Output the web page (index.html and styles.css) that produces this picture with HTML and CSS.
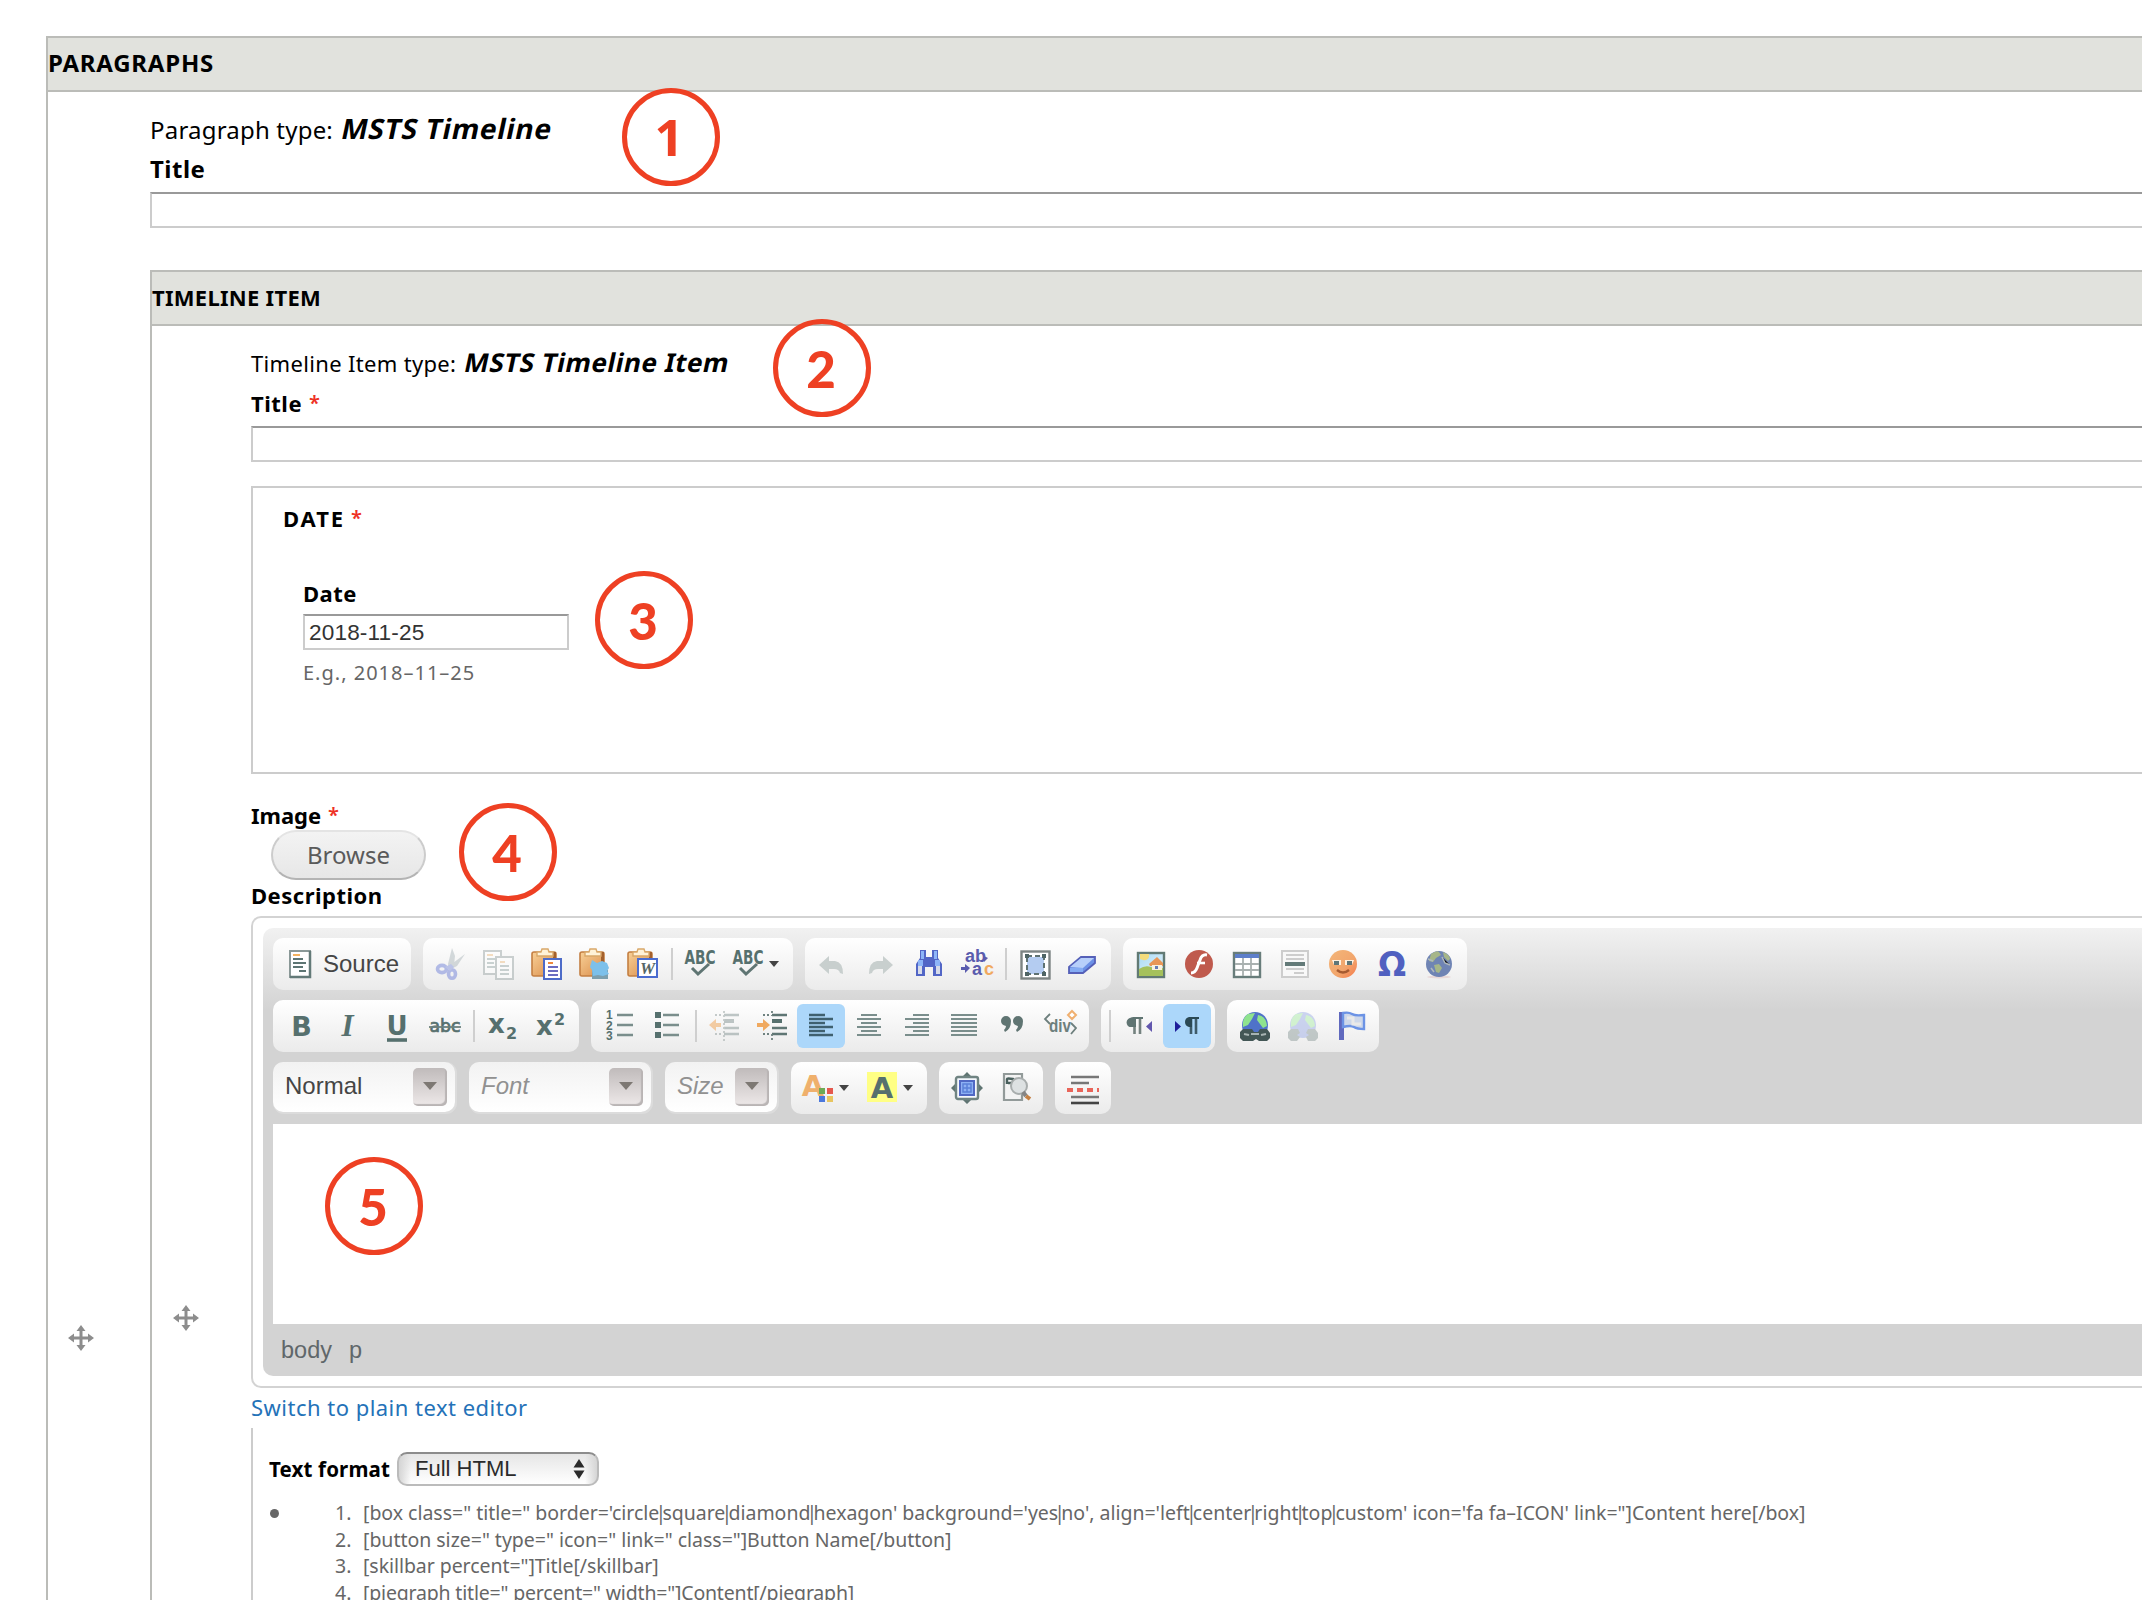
FILE: index.html
```html
<!DOCTYPE html>
<html lang="en">
<head>
<meta charset="utf-8">
<title>Paragraphs</title>
<link rel="stylesheet" href="styles.css">
</head>
<body>
<svg class="defs" aria-hidden="true">
  <defs>
    <linearGradient id="sky" x1="0" y1="0" x2="1" y2="1"><stop offset="0" stop-color="#a9daf5"/><stop offset="1" stop-color="#e4f3fa"/></linearGradient>
    <linearGradient id="wood" x1="0" y1="0" x2="1" y2="1"><stop offset="0" stop-color="#f8d097"/><stop offset="1" stop-color="#d98b48"/></linearGradient>
    <linearGradient id="face" x1="0" y1="0" x2="1" y2="1"><stop offset="0" stop-color="#f3b77a"/><stop offset=".6" stop-color="#f2a56c"/><stop offset="1" stop-color="#f5794a"/></linearGradient>
    <symbol id="clip" viewBox="0 0 32 32">
      <rect x="1" y="4" width="24" height="24" rx="2" fill="url(#wood)" stroke="#c47f42" stroke-width="1.6"/>
      <path d="M22 4h3v10h-3z" fill="#a3602c"/>
      <path d="M6 8V4h4l1-3h6l1 3h4v4z" fill="#fff2d8" stroke="#d9a869" stroke-width="1.4"/>
    </symbol>
    <symbol id="move" viewBox="0 0 26 26">
      <path d="M13 3v20M3 13h20" stroke="#8d8d8d" stroke-width="3"/>
      <path d="M13 0l4.500 6h-9zM13 26l4.500-6h-9zM0 13l6-4.500v9zM26 13l-6-4.500v9z" fill="#8d8d8d"/>
    </symbol>
  </defs>
</svg>

<section class="fieldset outer">
  <h2 class="legend legend-outer">PARAGRAPHS</h2>
  <div class="columns">
    <div class="handle-col"><svg class="handle handle-outer"><use href="#move"/></svg></div>
    <div class="content">
      <div class="type-row type-row-outer"><span>Paragraph type:</span><em>MSTS Timeline</em></div>
      <label class="label label-outer">Title</label>
      <div class="textfield"></div>

      <section class="fieldset inner">
        <h3 class="legend legend-inner">TIMELINE ITEM</h3>
        <div class="columns">
          <div class="handle-col handle-col-inner"><svg class="handle handle-inner"><use href="#move"/></svg></div>
          <div class="content">
            <div class="type-row type-row-inner"><span>Timeline Item type:</span><em>MSTS Timeline Item</em></div>
            <label class="label label-title"><span>Title</span><b class="req">*</b></label>
            <div class="textfield"></div>

            <div class="date-box">
              <div class="label label-group"><span>DATE</span><b class="req">*</b></div>
              <div class="date-field">
                <label class="label">Date</label>
                <div class="textfield date-input">2018-11-25</div>
                <div class="hint">E.g., 2018–11–25</div>
              </div>
            </div>

            <div class="label label-image"><span>Image</span><b class="req">*</b></div>
            <button class="browse">Browse</button>
            <div class="label label-desc">Description</div>

            <div class="editor">
              <div class="editor-inner">
                <div class="toolbar">
                  <div class="group">
                    <div class="btn source"><svg viewBox="0 0 32 32"><rect x="5" y="3" width="20" height="26" fill="#fff" stroke="#8a9897" stroke-width="2"/><path d="M25 3v26H5" fill="none" stroke="#637a78" stroke-width="2.500"/><path d="M8 7h7" stroke="#f3b25f" stroke-width="2"/><path d="M8 11h10M8 15h13M8 19h10M14 23h7" stroke="#5d7573" stroke-width="2"/></svg><span>Source</span></div>
                  </div>
                  <div class="group">
                    <div class="btn dim"><svg viewBox="0 0 32 32"><path d="M17 0l3 8-1 9-5 3-1-4zM30 6l-8 12-6 3-2-3z" fill="#b4bec2"/><g fill="none" stroke="#7c8cdb" stroke-width="3.600"><ellipse cx="7" cy="21" rx="4.500" ry="3.600"/><ellipse cx="17" cy="26" rx="3.500" ry="4.300"/></g><path d="M10 19l6-3 3 3-4 4z" fill="#8e9cdd"/></svg></div>
                    <div class="btn dim"><svg viewBox="0 0 32 32"><g fill="#fff" stroke="#a5afaf" stroke-width="2"><rect x="1" y="3" width="17" height="23"/><rect x="13" y="9" width="17" height="22"/></g><path d="M4 7h6M17 14h5" stroke="#f0c795" stroke-width="2"/><path d="M4 11h8M4 15h7M4 19h8M17 18h9M17 22h9M17 26h9" stroke="#a5b4b3" stroke-width="1.800"/></svg></div>
                    <div class="btn"><svg viewBox="0 0 32 32"><use href="#clip"/><rect x="13" y="11" width="17" height="20" fill="#fff" stroke="#4d6bc8" stroke-width="2"/><path d="M17 15h5" stroke="#f08a3c" stroke-width="2"/><path d="M17 19h10M17 23h10M17 27h10" stroke="#6a6cc0" stroke-width="2"/></svg></div>
                    <div class="btn"><svg viewBox="0 0 32 32"><use href="#clip"/><path d="M13 18l16 4v9H13z" fill="#7c9fae"/><path d="M13 12l5 3 5-2 5 2 2 5-2 3 2 3-6 2-5-1-5 1-1-6-2-3z" fill="#7cc0ea"/></svg></div>
                    <div class="btn"><svg viewBox="0 0 32 32"><use href="#clip"/><rect x="11" y="11" width="19" height="18" fill="#fff" stroke="#4a6cd0" stroke-width="2"/><text x="20.500" y="26" class="g-word">W</text></svg></div>
                    <i class="sep"></i>
                    <div class="btn"><svg viewBox="0 0 32 32"><text x="15" y="16" class="g-abc" textLength="31" lengthAdjust="spacingAndGlyphs">ABC</text><path d="M7 20l6 6L24 16" fill="none" stroke="#5f7573" stroke-width="3"/></svg></div>
                    <div class="btn wide"><svg viewBox="0 0 32 32"><text x="15" y="16" class="g-abc" textLength="31" lengthAdjust="spacingAndGlyphs">ABC</text><path d="M7 20l6 6L24 16" fill="none" stroke="#5f7573" stroke-width="3"/></svg><i class="caret"></i></div>
                  </div>
                  <div class="group">
                    <div class="btn"><svg viewBox="0 0 32 32"><path d="M2 17L12 8v5h6q8 1 8 13l-3-1q-1-4-6-4h-5v5z" fill="#c8cfce"/></svg></div>
                    <div class="btn"><svg viewBox="0 0 32 32"><path d="M28 17L18 8v5h-6q-8 1-8 13l3-1q1-4 6-4h5v5z" fill="#c8cfce"/></svg></div>
                    <div class="btn"><svg viewBox="0 0 32 32"><path d="M7 2h6v7h6V2h6v8l4 6v12h-9v-9h-8v9H3V16l4-6z" fill="#5266c6"/><path d="M8 3h3v8H8zM21 3h3v8h-3zM5 12h5v6H5zM22 12h5v6h-5z" fill="#8db5f8"/><path d="M5 18h4v8H5zM23 18h4v8h-4z" fill="#d7dce9"/></svg></div>
                    <div class="btn"><svg viewBox="0 0 32 32"><text class="g-rep"><tspan x="4" y="14">ab</tspan><tspan x="11" y="27">a</tspan><tspan x="23" y="27" class="g-orange">c</tspan></text><path d="M0 15v4h4v-3l5 4-5 5v-3H0zM23 8l4 2-4 4" fill="#5a5cae"/></svg></div>
                    <i class="sep"></i>
                    <div class="btn"><svg viewBox="0 0 32 32"><rect x="2.500" y="3.500" width="28" height="27" fill="#fff" stroke="#7d8483" stroke-width="2.400"/><rect x="8" y="9" width="17" height="17" fill="#b4ccf1"/><path d="M8 8h17v18H8z" fill="none" stroke="#5f7272" stroke-width="2" stroke-dasharray="5 3"/><path d="M6 6h4v4H6zM23 6h4v4h-4zM6 24h4v4H6zM23 24h4v4h-4z" fill="#4f6464"/></svg></div>
                    <div class="btn"><svg viewBox="0 0 32 32"><path d="M2 19L14 9h14v6L16 25H2z" fill="#6c90e6" stroke="#5560b8" stroke-width="1.800"/><path d="M3 19L14 10h13L16 20z" fill="#b7cffa"/><path d="M3 20h13v4H3z" fill="#84abf3"/></svg></div>
                  </div>
                  <div class="group">
                    <div class="btn"><svg viewBox="0 0 32 32"><rect x="3" y="5" width="26" height="24" fill="url(#sky)" stroke="#627a74" stroke-width="2.400"/><path d="M4 21q6-4 12-2t12 1v8H4z" fill="#a5c15c"/><path d="M5 6h9v3q-2 4-6 3l-3-1z" fill="#f4dc7c"/><path d="M14 16l8-7 6 6v3H15z" fill="#e89657"/><path d="M17 17h10v5H17z" fill="#f8f2df"/><path d="M20 18h3v3h-3z" fill="#657cb8"/></svg></div>
                    <div class="btn"><svg viewBox="0 0 32 32"><circle cx="16" cy="16" r="14" fill="#bf5a4d"/><path d="M24 7q-5-1-7 5l-3 8q-2 5-6 5" fill="none" stroke="#fff" stroke-width="3"/><path d="M14 15h8" stroke="#fff" stroke-width="2.600"/></svg></div>
                    <div class="btn"><svg viewBox="0 0 32 32"><rect x="3" y="5" width="26" height="24" fill="#fff" stroke="#687d7b" stroke-width="2.400"/><path d="M4 6h24v4H4z" fill="#5d7fca"/><path d="M4 16h24M4 22h24M12 10v18M20 10v18" stroke="#a9b1b0" stroke-width="1.800"/></svg></div>
                    <div class="btn"><svg viewBox="0 0 32 32"><rect x="3" y="3" width="26" height="26" fill="#f8f8f8" stroke="#cdcdcd" stroke-width="2"/><path d="M7 7h18M7 11h18M7 21h18M15 25h10" stroke="#cdcdcd" stroke-width="1.800"/><path d="M6 16h20" stroke="#637a78" stroke-width="4"/></svg></div>
                    <div class="btn"><svg viewBox="0 0 32 32"><circle cx="16" cy="16" r="14" fill="url(#face)"/><path d="M5 12h9v5H7zM18 12h9l-2 5h-7z" fill="#fff1df"/><path d="M7 13h5v4H7zM20 13h5v4h-5z" fill="#5e7779"/><path d="M10 22q6 5 12 0" fill="none" stroke="#a65a30" stroke-width="2.400"/></svg></div>
                    <div class="btn"><svg viewBox="0 0 32 32"><text x="17" y="28" class="g-omega">Ω</text></svg></div>
                    <div class="btn"><svg viewBox="0 0 32 32"><ellipse cx="16" cy="29" rx="12" ry="1.500" fill="#e8d8d8"/><circle cx="16" cy="16" r="13" fill="#6f84b4"/><path d="M8 6q6-4 8-2l2 3-5 3-3 4-4-1zM20 4q7 3 7 7l-2 2-4-4zM11 17l5-1 3 4-3 5-3-1z" fill="#a6b688"/><path d="M5 11l5 2M19 9l3 6 5 2M8 20l3 4" stroke="#b0b9bc" stroke-width="1.500"/></svg></div>
                  </div>
                </div>

                <div class="toolbar">
                  <div class="group">
                    <div class="btn"><svg viewBox="0 0 32 32"><text x="16.500" y="26" class="g-bold">B</text></svg></div>
                    <div class="btn"><svg viewBox="0 0 32 32"><text x="14.500" y="26" class="g-ital">I</text></svg></div>
                    <div class="btn"><svg viewBox="0 0 32 32"><text x="16" y="25" class="g-bold g-under">U</text><path d="M6 30h20" stroke="#56706e" stroke-width="3.600"/></svg></div>
                    <div class="btn"><svg viewBox="0 0 32 32"><text x="16" y="22" class="g-strike" textLength="31" lengthAdjust="spacingAndGlyphs">abc</text><path d="M0 17h32" stroke="#6b807e" stroke-width="1.800"/></svg></div>
                    <i class="sep"></i>
                    <div class="btn"><svg viewBox="0 0 32 32"><text x="1" y="23" class="g-x">x</text><text x="19" y="29" class="g-n">2</text></svg></div>
                    <div class="btn"><svg viewBox="0 0 32 32"><text x="1" y="25" class="g-x">x</text><text x="19" y="15" class="g-n">2</text></svg></div>
                  </div>
                  <div class="group">
                    <div class="btn"><svg viewBox="0 0 32 32"><g class="g-num"><text x="3" y="9">1</text><text x="3" y="20">2</text><text x="3" y="30">3</text></g><path d="M14 5h16M14 15h16M14 25h16" stroke="#7a8e8c" stroke-width="2.400"/></svg></div>
                    <div class="btn"><svg viewBox="0 0 32 32"><path d="M4 2h6v6H4zM4 12h6v6H4zM4 22h6v6H4z" fill="#56706e"/><path d="M12 5h16M12 15h16M12 25h16" stroke="#7a8e8c" stroke-width="2.400"/></svg></div>
                    <i class="sep"></i>
                    <div class="btn dim"><svg viewBox="0 0 32 32"><path d="M15 5h15M15 18h15M15 24h15" stroke="#8d9c9b" stroke-width="2.600"/><path d="M15 11h10" stroke="#8d9c9b" stroke-width="4"/><path d="M6 5h7M6 24h7M15 1v30" stroke="#9aa5a4" stroke-width="1.800" stroke-dasharray="2 2"/><path d="M0 15l7-6v4h5v4H7v4z" fill="#f0a95f"/></svg></div>
                    <div class="btn"><svg viewBox="0 0 32 32"><path d="M15 5h15M15 18h15M15 24h15" stroke="#5f7674" stroke-width="2.600"/><path d="M15 11h10" stroke="#56706e" stroke-width="4"/><path d="M6 5h7M6 24h7M15 1v5M15 24v6" stroke="#6f8280" stroke-width="1.800" stroke-dasharray="2 2"/><path d="M13 15L6 9v4H0v4h6v4z" fill="#f0a95f"/></svg></div>
                    <div class="btn on"><svg viewBox="0 0 32 32"><path d="M4 5h16M4 9h24M4 13h16M4 17h24M4 21h16M4 25h24" stroke="#3f606f" stroke-width="2.400"/></svg></div>
                    <div class="btn"><svg viewBox="0 0 32 32"><path d="M8 5h16M4 9h24M8 13h16M4 17h24M8 21h16M4 25h24" stroke="#7a8e8c" stroke-width="2.200"/></svg></div>
                    <div class="btn"><svg viewBox="0 0 32 32"><path d="M12 5h16M4 9h24M12 13h16M4 17h24M12 21h16M4 25h24" stroke="#7a8e8c" stroke-width="2.200"/></svg></div>
                    <div class="btn"><svg viewBox="0 0 32 32"><path d="M2 5h26M2 9h26M2 13h26M2 17h26M2 21h26M2 25h26" stroke="#7a8e8c" stroke-width="2.200"/></svg></div>
                    <div class="btn"><svg viewBox="0 0 32 32"><path d="M4 11a5 5 0 1 1 10 0q0 8-6 11l-1-2q2-2 2-4-5-1-5-5zM16 11a5 5 0 1 1 10 0q0 8-6 11l-1-2q2-2 2-4-5-1-5-5z" fill="#5f7472"/></svg></div>
                    <div class="btn"><svg viewBox="0 0 32 32"><path d="M5 4L0 9l5 5M26 13l5 5-5 6" fill="none" stroke="#6d7f7d" stroke-width="1.800"/><path d="M27 1l4 4-4 4-4-4z" fill="#fff" stroke="#f0b070" stroke-width="2"/><text x="4" y="22" class="g-div" textLength="22" lengthAdjust="spacingAndGlyphs">div</text></svg></div>
                  </div>
                  <div class="group">
                    <i class="sep"></i>
                    <div class="btn"><svg viewBox="0 0 32 32"><path d="M17 8v16M11.500 8v16" stroke="#74827f" stroke-width="2.600"/><path d="M20 8H10.500a4.500 4.500 0 0 0-4 9H12V9h8z" fill="#5f7472"/><path d="M20 7H10q-4 1-4 5t4 5h3V9h7z" fill="#5f7472"/><path d="M29 11v11l-6-5.500z" fill="#6257ae"/></svg></div>
                    <div class="btn on"><svg viewBox="0 0 32 32"><path d="M25 8v16M20 8v16" stroke="#3e5b69" stroke-width="2.600"/><path d="M28 7H18q-4 1-4 5t4 5h3V9h7z" fill="#2b4954"/><path d="M4 11v11l6-5.500z" fill="#1e1e9a"/></svg></div>
                  </div>
                  <div class="group">
                    <div class="btn"><svg viewBox="0 0 32 32"><circle cx="16" cy="15" r="13" fill="#4f72c9"/><path d="M9 4l7-1-3 6-4 6-5 2q-1-9 5-13zM19 5q8 1 9 11l-4 2-3-4-3-4z" fill="#8fe38e"/><path d="M4 19h9l2 3h4l2-3h7l3 4v5l-3 3h-8l-3-2-3 2H4l-3-3v-6z" fill="#435756"/><path d="M5 24l5 1M12 24h8M22 25l5-1" stroke="#a7b3b2" stroke-width="2"/></svg></div>
                    <div class="btn dim"><svg viewBox="0 0 32 32"><circle cx="16" cy="15" r="13" fill="#a6b5e8"/><path d="M9 4l7-1-3 6-4 6-5 2q-1-9 5-13zM19 5q8 1 9 11l-4 2-3-4-3-4z" fill="#b3edb1"/><path d="M4 19h7l2 4-3 2 3 2-3 4H4l-3-3v-6zM21 19h7l3 4v5l-3 3h-7l-2-4 3-2-3-2z" fill="#98a5a4"/></svg></div>
                    <div class="btn"><svg viewBox="0 0 32 32"><path d="M4 2h5v28H4z" fill="#6069be"/><path d="M8 3q6-1 9 1t12 1v14q-7 0-10-2t-11 0z" fill="#ced8ea" stroke="#6c93e5" stroke-width="2.400"/><path d="M12 8h6v6h8" stroke="#e9e9e9" stroke-width="3" fill="none"/></svg></div>
                  </div>
                </div>

                <div class="toolbar">
                  <div class="combo combo-format"><span>Normal</span><i class="drop"></i></div>
                  <div class="combo combo-font"><span>Font</span><i class="drop"></i></div>
                  <div class="combo combo-size"><span>Size</span><i class="drop"></i></div>
                  <div class="group">
                    <div class="btn wide"><svg viewBox="0 0 32 32"><text x="10" y="24" class="g-a g-acolor">A</text><path d="M16 16h6v6h-6z" fill="#6eaa55"/><path d="M24 16h6v6h-6z" fill="#e5574d"/><path d="M16 24h6v6h-6z" fill="#4b78dc"/><path d="M24 24h6v6h-6z" fill="#e8c55f"/></svg><i class="caret"></i></div>
                    <div class="btn wide"><svg viewBox="0 0 32 32"><rect width="30" height="30" fill="#ffff85"/><text x="15" y="26" class="g-a">A</text></svg><i class="caret"></i></div>
                  </div>
                  <div class="group">
                    <div class="btn"><svg viewBox="0 0 32 32"><path d="M16 0l5 5H11zM16 32l5-5H11zM0 16l5-5v10zM32 16l-5-5v10z" fill="#5f7472"/><rect x="5" y="5" width="22" height="22" rx="2" fill="#f5f8fd" stroke="#708482" stroke-width="2.400"/><rect x="9" y="9" width="14" height="14" fill="#8db0f4" stroke="#5068c4" stroke-width="2"/><path d="M12 12h8v8h-8zM12 16h8M16 12v8" stroke="#5b80d8" stroke-width="1.500" fill="none"/></svg></div>
                    <div class="btn"><svg viewBox="0 0 32 32"><path d="M5 2h18v26H5z" fill="#f3f3f3" stroke="#929a99" stroke-width="2.200"/><path d="M8 12V7q0-1 6 0v4H9" fill="none" stroke="#49605d" stroke-width="2.400"/><circle cx="20" cy="14" r="8" fill="#dde1e2" stroke="#a8adad" stroke-width="2"/><path d="M24 20l3 4" stroke="#858585" stroke-width="4"/><path d="M27 24l4 3" stroke="#c58144" stroke-width="4"/></svg></div>
                  </div>
                  <div class="group">
                    <div class="btn"><svg viewBox="0 0 32 32"><path d="M4 5h28M4 11h18M4 25h28" stroke="#777" stroke-width="2.600"/><path d="M4 31h28" stroke="#444" stroke-width="2.600"/><path d="M0 18h6M10 18h6M20 18h6M30 18h2" stroke="#e9655a" stroke-width="4"/></svg></div>
                  </div>
                </div>
                <div class="canvas"></div>
                <div class="path"><span>body</span><span>p</span></div>
              </div>
            </div>

            <a class="switch">Switch to plain text editor</a>

            <div class="format">
              <div class="format-row">
                <b>Text format</b>
                <div class="select"><span>Full HTML</span><svg viewBox="0 0 12 20"><path d="M6 0l5.500 8.500H.5zM6 20l5.500-8.500H.5z" fill="#2b2b2b"/></svg></div>
              </div>
              <ul class="tips">
                <li>
                  <ol>
                    <li><span class="line-1">[box class=" title=" border='circle<i>|</i>square<i>|</i>diamond<i>|</i>hexagon' background='yes<i>|</i>no', align='left<i>|</i>center<i>|</i>right<i>|</i>top<i>|</i>custom' icon='fa fa–ICON' link="]Content here[/box]</span></li>
                    <li><span class="line-2">[button size=" type=" icon=" link=" class="]Button Name[/button]</span></li>
                    <li><span class="line-3">[skillbar percent="]Title[/skillbar]</span></li>
                    <li><span class="line-4">[piegraph title=" percent=" width="]Content[/piegraph]</span></li>
                  </ol>
                </li>
              </ul>
            </div>
          </div>
        </div>
      </section>
    </div>
  </div>
</section>

<div class="mark m1">1</div>
<div class="mark m2">2</div>
<div class="mark m3">3</div>
<div class="mark m4">4</div>
<div class="mark m5">5</div>
</body>
</html>
```
FILE: styles.css
```css
* { box-sizing: border-box; }
html, body { height: 1600px; overflow: hidden; }
body { position: relative; margin: 0; background: #fff; color: #000; font-family: "Noto Sans", sans-serif; font-size: 22px; white-space: nowrap; }
.defs { position: absolute; width: 0; height: 0; }
h2, h3, ul, ol { margin: 0; padding: 0; }

/* nested fieldsets */
.fieldset { border: 2px solid #bbbcb8; border-right: 0; border-bottom: 0; }
.outer { margin: 36px 0 0 46px; height: 1564px; overflow: hidden; }
.inner { margin-top: 42px; }
.legend { height: 54px; background: #e1e2dd; border-bottom: 2px solid #bbbcb8; font-weight: 700; line-height: 50px; }
.legend-outer { font-size: 24px; letter-spacing: .76px; }
.legend-inner { font-size: 22px; letter-spacing: .28px; }
.columns { display: flex; }
.handle-col { flex: 0 0 102px; }
.handle-col-inner { flex-basis: 99px; }
.content { flex: 1; min-width: 0; }
.handle { display: block; width: 26px; height: 26px; }
.handle-outer { margin: 1233px 0 0 20px; }
.handle-inner { margin: 979px 0 0 21px; }

/* form rows */
.type-row { display: flex; align-items: baseline; gap: 9px; height: 40px; line-height: 40px; }
.type-row em { font-style: normal; font-weight: 700; transform: skewX(-12deg); }
.type-row-outer { margin-top: 16px; font-size: 24px; letter-spacing: .2px; }
.type-row-outer em { font-size: 28px; letter-spacing: .75px; }
.type-row-inner { margin-top: 16px; letter-spacing: .33px; }
.type-row-inner em { font-size: 26px; letter-spacing: .5px; }
.label { display: flex; gap: 7px; height: 32px; line-height: 31px; font-weight: 700; letter-spacing: .5px; }
.label-outer { margin-top: 5px; font-size: 24px; line-height: 32px; }
.label-title { margin-top: 5px; line-height: 32px; }
.label-image { margin-top: 25px; height: 31px; line-height: 32px; letter-spacing: -.05px; }
.label-group { gap: 6px; letter-spacing: 1.9px; line-height: 32px; }
.req { color: #ee3124; font-size: 20px; font-weight: 600; }
.textfield { height: 36px; margin-top: 7px; border: 2px solid #ccc; border-top-color: #999; border-right: 0; background: #fff; }
.date-box { height: 288px; margin-top: 24px; padding: 14px 0 0 30px; border: 2px solid #ccc; border-right: 0; }
.date-field { margin: 44px 0 0 20px; }
.date-input { width: 266px; margin-top: 4px; padding-left: 4px; border-right: 2px solid #ccc; font: 22.6px/34px "Liberation Sans", sans-serif; letter-spacing: .15px; color: #333; }
.hint { margin-top: 7px; color: #666; font-size: 20px; line-height: 31px; letter-spacing: 1px; }
.browse { display: block; width: 155px; height: 50px; margin-left: 20px; padding: 0; border: 2px solid #ccc; border-top-color: #e4e4e4; border-bottom-color: #b4b4b4; border-radius: 25px; background: linear-gradient(#f3f3f3, #e7e7e7); color: #5a5a5a; font: 24px/44px "Noto Sans", sans-serif; }

/* rich text editor */
.editor { height: 472px; margin-top: 4px; padding: 10px; border: 2px solid #d3d3d3; border-right: 0; border-radius: 10px 0 0 10px; }
.editor-inner { height: 448px; padding: 10px 0 0 10px; border-radius: 10px 0 0 10px; background: linear-gradient(#f1f1f1, #d3d3d3 82px); margin-right: -10px; }
.toolbar { display: flex; gap: 12px; height: 52px; margin-bottom: 10px; }
.group { display: flex; align-items: center; height: 52px; padding: 4px; border-radius: 10px; background: linear-gradient(#fff, #ebebeb); }
.btn { display: flex; align-items: center; width: 48px; height: 44px; padding-left: 8px; border-radius: 6px; }
.btn svg { flex: none; width: 32px; height: 32px; overflow: visible; }
.btn.wide { width: 64px; }
.btn.dim svg { opacity: .55; }
.btn.on { background: #acd7fa; }
.btn.source { width: 130px; gap: 6px; font: 24px/44px "Liberation Sans", sans-serif; color: #454545; }
.sep { width: 2px; height: 32px; margin: 0 4px; background: #cfcfcf; }
.caret { margin-left: 4px; border: 5.500px solid transparent; border-top: 6px solid #444; border-bottom: 0; }
.combo { display: flex; justify-content: space-between; width: 182px; height: 50px; padding: 6px 8px 6px 12px; margin-right: 2px; border-radius: 10px; background: linear-gradient(#f2f2f2, #fff); color: #454545; font: 24px/36px "Liberation Sans", sans-serif; box-shadow: 1px 1px 0 1px #dcdcdc; }
.combo-size { width: 112px; }
.combo-font, .combo-size { color: #919191; font-style: italic; }
.drop { width: 34px; height: 38px; border-radius: 5px; background: linear-gradient(#c0bbbb, #eee9e9); box-shadow: inset -2px -2px 1px #b9b4b4; display: flex; align-items: center; justify-content: center; }
.drop::after { content: ""; border: 7px solid transparent; border-top: 8px solid #7d7873; border-bottom: 0; margin-top: -2px; }
.canvas { height: 200px; background: #fff; }
.path { display: flex; gap: 17px; padding-left: 8px; color: #60676a; font: 23.5px/52px "Liberation Sans", sans-serif; }

/* lettered toolbar glyphs */
.btn text { fill: #56706e; font-family: "DejaVu Sans", sans-serif; font-weight: 700; }
.btn .g-word { font: italic 700 17px "Liberation Serif", serif; fill: #566; text-anchor: middle; }
.btn .g-abc { font-size: 19px; text-anchor: middle; }
.btn .g-rep { font: 700 18px "Liberation Sans", sans-serif; fill: #5a5cae; }
.btn .g-orange { fill: #f0a95f; }
.btn .g-omega { font-size: 33px; fill: #5060c0; text-anchor: middle; }
.btn .g-bold { font-size: 27px; text-anchor: middle; }
.btn .g-under { font-size: 26px; }
.btn .g-ital { font: italic 700 31px "Liberation Serif", serif; text-anchor: middle; }
.btn .g-strike { font-size: 17px; font-weight: 400; text-anchor: middle; stroke: #56706e; stroke-width: .7px; }
.btn .g-x { font-size: 26px; }
.btn .g-n { font-size: 16px; }
.btn .g-num text { font: 700 12px "Liberation Sans", sans-serif; }
.btn .g-div { font: 700 18px "Liberation Sans", sans-serif; fill: #6d7f7d; }
.btn .g-a { font-size: 29px; text-anchor: middle; }
.btn .g-acolor { fill: #efb06c; }

/* text format */
.switch { display: block; height: 32px; margin-top: 3px; line-height: 32px; letter-spacing: .48px; color: #2472b8; }
.format { height: 300px; margin-top: 5px; padding: 24px 0 0 16px; border-left: 2px solid #ccc; }
.format-row { display: flex; gap: 6px; height: 34px; line-height: 34px; }
.format-row b { width: 122px; font-size: 20.5px; letter-spacing: .15px; }
.select { display: flex; align-items: center; justify-content: space-between; width: 202px; height: 34px; padding: 0 12px 0 16px; border: 2px solid #bbb; border-top-color: #8c8c8c; border-radius: 10px; background: linear-gradient(90deg, #d5d5d5, transparent 12px, transparent calc(100% - 12px), #d5d5d5), linear-gradient(#e6e6e6, #fff); color: #2b2b2b; font: 22px/30px "Liberation Sans", sans-serif; }
.select span { margin-top: -1px; }
.select svg { width: 12px; height: 20px; }
.tips { margin-top: 14px; color: #666; font-size: 19.5px; line-height: 26.6px; list-style: none; }
.tips > li { position: relative; padding-left: 94px; }
.tips > li::before { content: ""; position: absolute; left: 1px; top: 9px; width: 9px; height: 9px; border-radius: 50%; background: #666; }
.tips i { margin: 0 -3.800px; font-style: normal; }
.tips ol { list-style: none; counter-reset: n; }
.tips ol li { display: flex; }
.tips ol li::before { counter-increment: n; content: counter(n) "."; flex: 0 0 19px; margin-left: -28px; margin-right: 9px; text-align: left; }
.line-1, .line-2 { letter-spacing: -.02px; }
.line-3 { letter-spacing: -.06px; }
.line-4 { letter-spacing: -.18px; }

/* numbered annotations */
.mark { position: absolute; width: 98px; height: 98px; padding-right: 2px; border: 5px solid #ee4023; border-radius: 50%; color: #ee4023; font: 900 51px/89px Lato, sans-serif; text-align: center; }
.m1 { left: 622px; top: 88px; padding-right: 4px; font-family: "Noto Sans", sans-serif; font-weight: 700; line-height: 87px; }
.m2 { left: 773px; top: 319px; }
.m3 { left: 595px; top: 571px; }
.m4 { left: 459px; top: 803px; }
.m5 { left: 325px; top: 1157px; }
```
